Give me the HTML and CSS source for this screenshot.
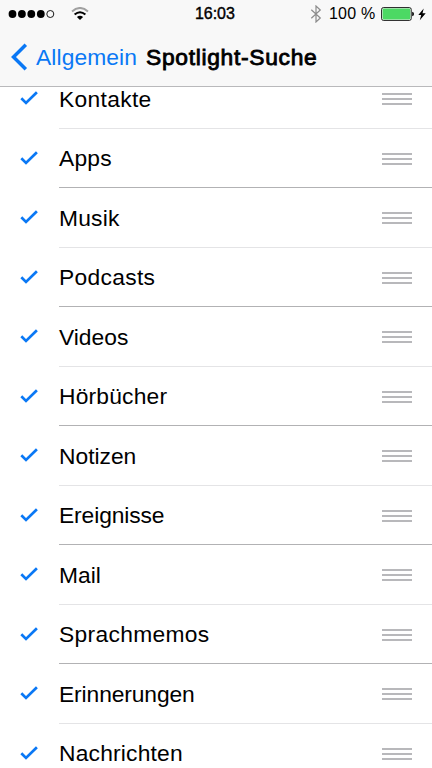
FILE: index.html
```html
<!DOCTYPE html>
<html lang="de">
<head>
<meta charset="utf-8">
<title>Spotlight-Suche</title>
<link rel="stylesheet" href="styles.css">
</head>
<body>
<svg width="0" height="0" class="defs" aria-hidden="true">
  <symbol id="check" viewBox="0 0 18 14"><path d="M1.3 7.3 6 11.9 16.9 1.3" fill="none" stroke="#0a78f5" stroke-width="2.7"/></symbol>
</svg>
<div class="screen">
  <header class="header">
    <div class="status">
      <svg class="signal" width="47" height="10" viewBox="0 0 47 10"><circle cx="4.5" cy="5" r="3.9"/><circle cx="13.9" cy="5" r="3.9"/><circle cx="23.3" cy="5" r="3.9"/><circle cx="32.8" cy="5" r="3.9"/><circle cx="42.3" cy="5" r="3.5" fill="none" stroke="#000" stroke-width=".9"/></svg>
      <svg class="wifi" width="18" height="14" viewBox="0 0 18 14"><path d="M1 4.5Q9-2.6 17 4.5" fill="none" stroke="#a0a0a0" stroke-width="1.9"/><path d="M3.6 7.6Q9 3 14.4 7.6" fill="none" stroke="#000" stroke-width="2"/><path d="M5.9 10Q9 7.4 12.1 10L9 13.1Z"/></svg>
      <span class="time">16:03</span>
      <svg class="bluetooth" width="12" height="18" viewBox="0 0 12 18"><path d="M1.3 4.8 10.3 13 6 17V1l4.3 4-9 8.2" fill="none" stroke="#8c8c8c" stroke-width="1.2"/></svg>
      <span class="percent">100 %</span>
      <svg class="battery" width="34" height="14" viewBox="0 0 34 14"><rect x=".6" y=".6" width="29.6" height="12.8" rx="1.8" fill="#fff" stroke="#000" stroke-width=".9"/><rect x="1.6" y="1.6" width="27.6" height="10.8" rx=".8" fill="#4cd964"/><path d="M31.2 4.8Q33 5.3 33 7T31.2 9.2Z"/></svg>
      <svg class="bolt" width="8" height="13" viewBox="0 0 8 13"><path d="M5.7.5.3 7h2.9L1.8 12.2 7.7 5.2H4.5Z"/></svg>
    </div>
    <nav class="nav">
      <svg class="chevron" width="17" height="28" viewBox="0 0 17 28"><path d="M14.8 1.7 2.5 14 14.8 26.3" fill="none" stroke="#0a78f5" stroke-width="3.5"/></svg>
      <a class="back">Allgemein</a>
      <h1 class="title">Spotlight-Suche</h1>
    </nav>
  </header>
  <main class="viewport">
    <ul class="list">
      <li class="row"><svg class="check"><use href="#check"/></svg><div class="cell"><span class="label loose">Kontakte</span><span class="grip"></span></div></li>
      <li class="row"><svg class="check"><use href="#check"/></svg><div class="cell"><span class="label">Apps</span><span class="grip"></span></div></li>
      <li class="row"><svg class="check"><use href="#check"/></svg><div class="cell"><span class="label">Musik</span><span class="grip"></span></div></li>
      <li class="row"><svg class="check"><use href="#check"/></svg><div class="cell"><span class="label loose">Podcasts</span><span class="grip"></span></div></li>
      <li class="row"><svg class="check"><use href="#check"/></svg><div class="cell"><span class="label tight">Videos</span><span class="grip"></span></div></li>
      <li class="row"><svg class="check"><use href="#check"/></svg><div class="cell"><span class="label">Hörbücher</span><span class="grip"></span></div></li>
      <li class="row"><svg class="check"><use href="#check"/></svg><div class="cell"><span class="label tight">Notizen</span><span class="grip"></span></div></li>
      <li class="row"><svg class="check"><use href="#check"/></svg><div class="cell"><span class="label tighter">Ereignisse</span><span class="grip"></span></div></li>
      <li class="row"><svg class="check"><use href="#check"/></svg><div class="cell"><span class="label tight">Mail</span><span class="grip"></span></div></li>
      <li class="row"><svg class="check"><use href="#check"/></svg><div class="cell"><span class="label loose">Sprachmemos</span><span class="grip"></span></div></li>
      <li class="row"><svg class="check"><use href="#check"/></svg><div class="cell"><span class="label tighter">Erinnerungen</span><span class="grip"></span></div></li>
      <li class="row"><svg class="check"><use href="#check"/></svg><div class="cell"><span class="label">Nachrichten</span><span class="grip"></span></div></li>
    </ul>
  </main>
</div>
</body>
</html>
```
FILE: styles.css
```css
* { box-sizing: border-box; }
body { margin: 0; background: #fff; color: #000; font-family: "Liberation Sans", Arial, sans-serif; }
svg { display: block; flex: none; }
.defs { display: none; }
.screen { display: flex; flex-direction: column; width: 432px; height: 768px; overflow: hidden; }
.header { flex: none; height: 87px; background: #f8f8f8; border-bottom: 1px solid #b9b9bb; }
.status { display: flex; align-items: center; height: 28px; padding-left: 8px; font-size: 16px; line-height: 28px; white-space: nowrap; }
.wifi { margin: 0 0 1px 16px; }
.time { width: 42px; margin-left: 106px; letter-spacing: -.05px; -webkit-text-stroke: .4px #000; }
.bluetooth { margin-left: 73px; }
.percent { width: 51px; margin-left: 7px; letter-spacing: .2px; }
.battery { margin-left: 1px; }
.bolt { margin-left: 3px; }
.nav { display: flex; align-items: center; height: 58px; padding-left: 11px; font-size: 22.8px; line-height: 58px; white-space: nowrap; }
.back { width: 101px; margin-left: 8px; color: #0a78f5; letter-spacing: .1px; }
.title { margin: 0 0 0 9px; font-size: 22.8px; font-weight: 400; letter-spacing: .7px; -webkit-text-stroke: .85px #000; }
.viewport { flex: 1; min-height: 0; overflow: hidden; }
.list { margin: -18px 0 0; padding: 0; list-style: none; }
.row { display: flex; align-items: center; height: 60px; padding-left: 20px; }
.row:nth-child(even) { height: 59px; }
.check { width: 18px; height: 14px; margin-bottom: 2px; }
.cell { display: flex; align-items: center; justify-content: space-between; flex: 1; height: 100%; margin-left: 21px; padding-right: 20px; border-bottom: 1px solid #e4e4e6; }
.row:nth-child(even) .cell { border-bottom-color: #b2b2b4; }
.label { font-size: 22.8px; line-height: 30px; letter-spacing: .2px; }
.loose { letter-spacing: .32px; }
.tight { letter-spacing: 0; }
.tighter { letter-spacing: -.1px; }
.grip { width: 30px; height: 12px; background: linear-gradient(#b8b8bb 0 2px, transparent 2px 5px, #b8b8bb 5px 7px, transparent 7px 10px, #b8b8bb 10px 12px); }
.row:nth-child(even) .grip { margin-top: 2px; }
```
